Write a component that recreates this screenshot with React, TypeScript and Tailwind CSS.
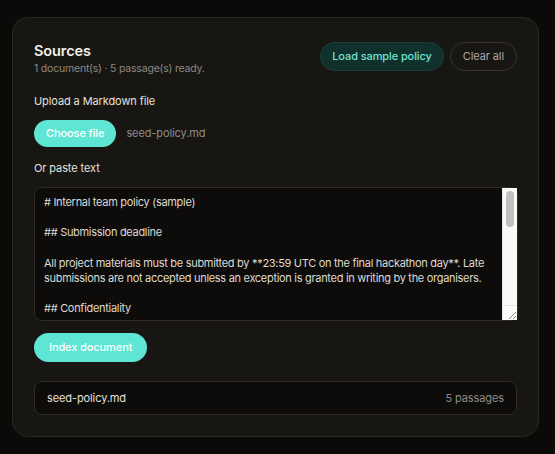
import React, { useState } from 'react';

const SAMPLE = `# Internal team policy (sample)

## Submission deadline

All project materials must be submitted by **23:59 UTC on the final hackathon day**. Late submissions are not accepted unless an exception is granted in writing by the organisers.

## Confidentiality

Do not share internal documents, credentials or unreleased designs outside the team. Anything marked **confidential** stays in the shared drive.

## Expenses

Travel and meal expenses up to 50 EUR per day are reimbursed with a receipt.
`;

export default function App() {
  const [text, setText] = useState(SAMPLE);

  return (
    <div
      className="min-h-screen w-full bg-[#0b0a09] pt-[17px] pl-[12px] pr-[16px]"
      style={{ fontFamily: 'Inter, "Noto Sans", sans-serif' }}
    >
      <div className="w-[527px] h-[420px] rounded-[16px] border border-[#2a2825] bg-[#181613] px-[21px] pt-[23px]">
        {/* Header */}
        <div className="flex items-start justify-between">
          <div>
            <h2 className="text-[14.5px] font-semibold text-[#f2efea] leading-[20px] tracking-[-0.1px]">Sources</h2>
            <p className="text-[10.5px] text-[#8d8983] leading-[14px] mt-[1px] tracking-[-0.2px]">
              1 document(s) · 5 passage(s) ready.
            </p>
          </div>
          <div className="flex items-center gap-[6px] mt-[1px]">
            <button className="h-[29px] px-[11px] rounded-full bg-[#10302c] border border-[#1b3e39] text-[11px] font-medium text-[#6fe3d2] tracking-[-0.1px]">
              Load sample policy
            </button>
            <button className="h-[29px] px-[12px] rounded-full border border-[#36332f] text-[11px] text-[#aaa6a0] tracking-[-0.1px]">
              Clear all
            </button>
          </div>
        </div>

        {/* Upload */}
        <p className="mt-[17px] text-[11px] text-[#e4e1dc] leading-[16px] tracking-[-0.1px]">Upload a Markdown file</p>
        <div className="mt-[11px] flex items-center gap-[10px]">
          <button className="h-[27px] px-[12px] rounded-full bg-[#5ee5d3] text-[11px] font-medium text-white tracking-[-0.1px]">
            Choose file
          </button>
          <span className="text-[11px] text-[#8f8b85] tracking-[-0.1px]">seed-policy.md</span>
        </div>

        {/* Paste */}
        <p className="mt-[13px] text-[11px] text-[#e4e1dc] leading-[16px] tracking-[-0.1px]">Or paste text</p>
        <div className="relative mt-[11px] w-[484px] h-[134px]">
          <textarea
            value={text}
            onChange={(e) => setText(e.target.value)}
            className="block w-full h-full rounded-[8px] border border-[#2e2b28] bg-[#0d0c0a] pl-[9px] pr-[17px] py-[7px] text-[11px] leading-[15.2px] text-[#dedad4] tracking-[-0.3px] outline-none resize-none"
            style={{ fontFamily: 'Inter, "Noto Sans", sans-serif' }}
          />
          {/* scrollbar */}
          <div className="absolute top-[1px] right-[1px] bottom-[1px] w-[15px] flex flex-col bg-[#fafafa] border-l border-[#e8e8e8] pointer-events-none">
            <div className="flex-1 px-[3px] pt-[3px]">
              <div className="h-[36px] rounded-full bg-[#c1c1c1]" />
            </div>
            <div className="h-[15px] border-t border-[#e3e3e3] flex items-end justify-end">
              <svg width="12" height="12" viewBox="0 0 12 12">
                <line x1="11" y1="4" x2="4" y2="11" stroke="#8a8a8a" strokeWidth="1" />
                <line x1="11" y1="8" x2="8" y2="11" stroke="#8a8a8a" strokeWidth="1" />
              </svg>
            </div>
          </div>
        </div>

        <button className="mt-[12px] h-[29px] px-[15px] rounded-full bg-[#5ee5d3] text-[11px] font-medium text-white tracking-[-0.1px]">
          Index document
        </button>

        {/* Documents */}
        <div className="mt-[19px] h-[34px] rounded-[8px] border border-[#2e2b28] bg-[#0d0c0a] flex items-center justify-between px-[12px]">
          <span className="text-[11px] text-[#e4e1dc] tracking-[-0.1px]">seed-policy.md</span>
          <span className="text-[11px] text-[#8f8b85] tracking-[-0.1px]">5 passages</span>
        </div>
      </div>
    </div>
  );
}
